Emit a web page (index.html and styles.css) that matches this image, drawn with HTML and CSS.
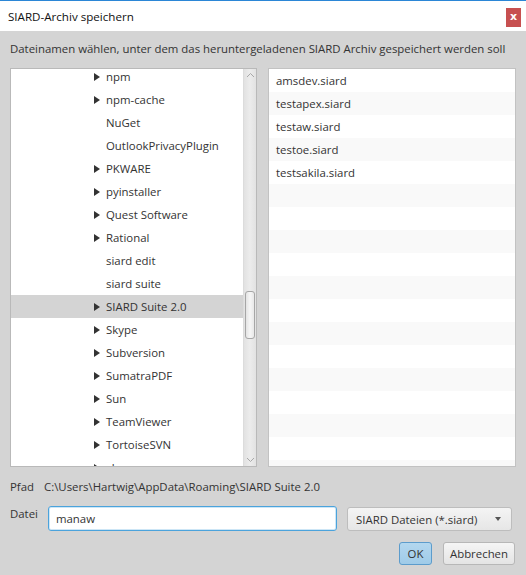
FILE: index.html
```html
<!DOCTYPE html>
<html lang="de">
<head>
<meta charset="utf-8">
<title>SIARD-Archiv speichern</title>
<link rel="stylesheet" href="styles.css">
</head>
<body>
<div class="window">
  <div class="titlebar">
    <span class="title">SIARD-Archiv speichern</span>
    <span class="close">x</span>
  </div>
  <div class="content">
    <div class="prompt">Dateinamen wählen, unter dem das heruntergeladenen SIARD Archiv gespeichert werden soll</div>
    <div class="panes">
      <div class="tree">
        <div class="tree-body">
          <div class="tree-rows">
            <div class="row"><span class="arrow"></span><span>npm</span></div>
            <div class="row"><span class="arrow"></span><span>npm-cache</span></div>
            <div class="row"><span class="noarrow"></span><span>NuGet</span></div>
            <div class="row"><span class="noarrow"></span><span>OutlookPrivacyPlugin</span></div>
            <div class="row"><span class="arrow"></span><span>PKWARE</span></div>
            <div class="row"><span class="arrow"></span><span>pyinstaller</span></div>
            <div class="row"><span class="arrow"></span><span>Quest Software</span></div>
            <div class="row"><span class="arrow"></span><span>Rational</span></div>
            <div class="row"><span class="noarrow"></span><span>siard edit</span></div>
            <div class="row"><span class="noarrow"></span><span>siard suite</span></div>
            <div class="row selected"><span class="arrow"></span><span>SIARD Suite 2.0</span></div>
            <div class="row"><span class="arrow"></span><span>Skype</span></div>
            <div class="row"><span class="arrow"></span><span>Subversion</span></div>
            <div class="row"><span class="arrow"></span><span>SumatraPDF</span></div>
            <div class="row"><span class="arrow"></span><span>Sun</span></div>
            <div class="row"><span class="arrow"></span><span>TeamViewer</span></div>
            <div class="row"><span class="arrow"></span><span>TortoiseSVN</span></div>
            <div class="row"><span class="arrow"></span><span>vlc</span></div>
          </div>
        </div>
        <div class="scrollbar">
          <svg class="chev" width="9" height="6" viewBox="0 0 9 6"><path d="M1 5 L4.5 1.5 L8 5" fill="none" stroke="#a8a8a8" stroke-width="1"/></svg>
          <div class="track"><div class="thumb"></div></div>
          <svg class="chev" width="9" height="6" viewBox="0 0 9 6"><path d="M1 1 L4.5 4.5 L8 1" fill="none" stroke="#a8a8a8" stroke-width="1"/></svg>
        </div>
      </div>
      <div class="list">
        <div class="item">amsdev.siard</div>
        <div class="item">testapex.siard</div>
        <div class="item">testaw.siard</div>
        <div class="item">testoe.siard</div>
        <div class="item">testsakila.siard</div>
        <div class="item"></div>
        <div class="item"></div>
        <div class="item"></div>
        <div class="item"></div>
        <div class="item"></div>
        <div class="item"></div>
        <div class="item"></div>
        <div class="item"></div>
        <div class="item"></div>
        <div class="item"></div>
        <div class="item"></div>
        <div class="item"></div>
        <div class="item"></div>
      </div>
    </div>
    <div class="path-row">
      <span class="label">Pfad</span>
      <span class="path">C:\Users\Hartwig\AppData\Roaming\SIARD Suite 2.0</span>
    </div>
    <div class="file-row">
      <span class="label datei">Datei</span>
      <div class="field">manaw</div>
      <div class="combo"><span>SIARD Dateien (*.siard)</span><span class="combo-arrow"></span></div>
    </div>
    <div class="buttons">
      <div class="btn ok">OK</div>
      <div class="btn">Abbrechen</div>
    </div>
  </div>
</div>
</body>
</html>
```
FILE: styles.css
```css
* { box-sizing: border-box; }
html, body { margin: 0; padding: 0; }
body {
  font-family: "Open Sans", "Noto Sans", sans-serif;
  font-size: 11.4px;
  color: #333;
  width: 526px;
  height: 575px;
  overflow: hidden;
}
.window {
  width: 526px;
  height: 575px;
  border-top: 1px solid #2b86d6;
  display: flex;
  flex-direction: column;
  background: #d4d4d4;
}
.titlebar {
  height: 30px;
  background: #fff;
  display: flex;
  align-items: center;
  justify-content: space-between;
  padding-left: 8px;
  padding-right: 5px;
  flex: none;
}
.title { color: #111; font-size: 11.6px; }
.close {
  width: 15px;
  height: 19px;
  background: #c75050;
  color: #fff;
  font-weight: bold;
  font-size: 11px;
  line-height: 17px;
  text-align: center;
  font-family: "DejaVu Sans", sans-serif;
  align-self: flex-start;
  margin-top: 7px;
}
.content {
  flex: 1;
  padding: 0 10px;
  display: flex;
  flex-direction: column;
}
.prompt {
  margin-top: 9px;
  height: 18px;
  line-height: 18px;
  white-space: nowrap;
}
.panes {
  margin-top: 10px;
  height: 399px;
  display: flex;
  gap: 11px;
}
.tree {
  width: 247px;
  border: 1px solid #b9b9b9;
  background: #fff;
  display: flex;
  overflow: hidden;
}
.tree-body { flex: 1; overflow: hidden; }
.tree-rows { margin-top: -4px; }
.row {
  height: 23px;
  display: flex;
  align-items: center;
  padding-left: 83px;
  white-space: nowrap;
}
.row.selected { background: #d4d4d4; }
.arrow, .noarrow { width: 12px; flex: none; height: 8px; }
.arrow {
  width: 0;
  height: 0;
  border-top: 4px solid transparent;
  border-bottom: 4px solid transparent;
  border-left: 6px solid #333;
  margin-right: 6px;
}
.scrollbar {
  width: 13px;
  flex: none;
  background: linear-gradient(to right, #e2e2e2, #ececec 50%, #e2e2e2);
  border-left: 1px solid #dcdcdc;
  display: flex;
  flex-direction: column;
  align-items: center;
  padding: 2px 0;
}
.chev { flex: none; margin: 1px 0; }
.track { flex: 1; width: 100%; }
.thumb {
  margin: 212px 0 0 1px;
  width: 10px;
  height: 48px;
  border: 1px solid #a6a6a6;
  border-radius: 3px;
  background: linear-gradient(to right, #e4e4e4, #f6f6f6 50%, #e8e8e8);
}
.list {
  width: 248px;
  border: 1px solid #c2c2c2;
  background: #fff;
  overflow: hidden;
}
.item {
  height: 23px;
  line-height: 23px;
  padding-left: 7px;
}
.item:nth-child(even) { background: #f9f9f9; }
.path-row {
  margin-top: 11px;
  display: flex;
  gap: 10px;
  height: 18px;
  line-height: 18px;
}
.file-row {
  margin-top: 10px;
  display: flex;
  align-items: flex-start;
}
.datei { width: 38px; line-height: 18px; margin-top: -1px; }
.field {
  width: 289px;
  height: 25px;
  border: 1px solid #4ba3dc;
  border-radius: 3px;
  background: #fff;
  padding-left: 7px;
  line-height: 23px;
  box-shadow: inset 0 0 0 1px #cde6f6;
}
.combo {
  margin-left: 10px;
  width: 165px;
  height: 24px;
  margin-top: 1px;
  border: 1px solid #bdbdbd;
  border-radius: 3px;
  background: linear-gradient(#f4f4f4, #e6e6e6);
  display: flex;
  align-items: center;
  justify-content: space-between;
  padding: 0 10px 0 8px;
}
.combo-arrow {
  width: 0;
  height: 0;
  border-left: 3.5px solid transparent;
  border-right: 3.5px solid transparent;
  border-top: 4px solid #555;
}
.buttons {
  margin-top: 11px;
  display: flex;
  justify-content: flex-end;
  gap: 11px;
  padding-right: 1px;
}
.btn {
  height: 23px;
  line-height: 21px;
  border: 1px solid #b7b7b7;
  border-radius: 3px;
  background: linear-gradient(#f5f5f5, #e4e4e4);
  padding: 0 6px;
  text-align: center;
  min-width: 33px;
}
.btn.ok {
  width: 33px;
  padding: 0;
  background: linear-gradient(#b3d7ef, #9fcbe8);
  border-color: #5c9ccc;
}
```
